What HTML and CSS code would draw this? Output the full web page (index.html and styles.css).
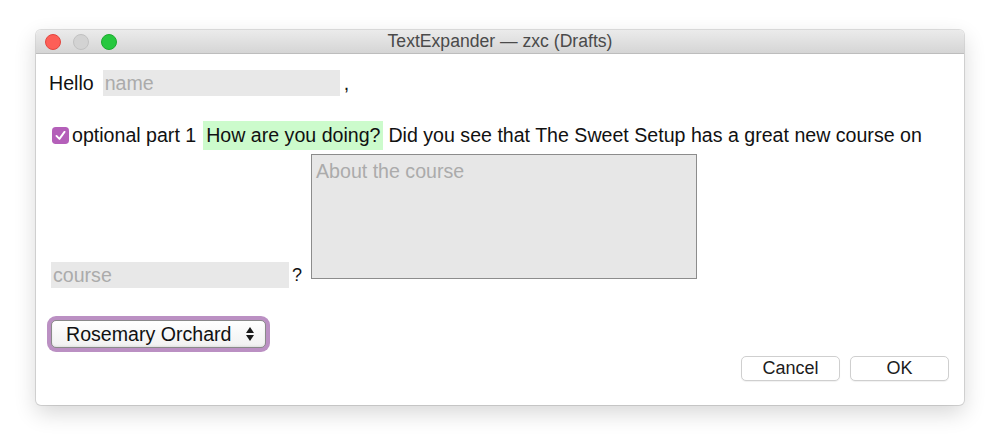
FILE: index.html
```html
<!DOCTYPE html>
<html>
<head>
<meta charset="utf-8">
<link rel="stylesheet" href="styles.css">
</head>
<body>
<div class="page">
  <div class="window">
    <div class="titlebar">
      <div class="lights">
        <span class="light red"></span>
        <span class="light gray"></span>
        <span class="light green"></span>
      </div>
      <div class="title">TextExpander — zxc (Drafts)</div>
    </div>
    <div class="content">
      <div class="row row1">
        <span class="label">Hello</span>
        <span class="field name">name</span>
        <span class="comma">,</span>
      </div>
      <div class="row row2">
        <span class="check">
          <svg width="17" height="17" viewBox="0 0 16 16"><rect x="0" y="0" width="16" height="16" rx="3.5" fill="#b45fb9"/><path d="M4.2 8.4 L7 11.2 L11.8 4.6" fill="none" stroke="#fff" stroke-width="1.8" stroke-linecap="round" stroke-linejoin="round"/></svg>
        </span>
        <span class="label opt">optional part 1</span>
        <span class="hl">How are you doing?</span>
        <span class="label rest">Did you see that The Sweet Setup has a great new course on</span>
      </div>
      <div class="row row3">
        <span class="field course">course</span>
        <span class="q">?</span>
        <div class="textarea">About the course</div>
      </div>
      <div class="row row4">
        <div class="ring">
          <div class="popup">
            <span>Rosemary Orchard</span>
            <svg class="arrows" width="10" height="18" viewBox="0 0 10 18"><path d="M5 2 L9 8 L1 8 Z" fill="#1a1a1a"/><path d="M5 16 L9 10 L1 10 Z" fill="#1a1a1a"/></svg>
          </div>
        </div>
      </div>
      <div class="row buttons">
        <div class="btn">Cancel</div>
        <div class="btn">OK</div>
      </div>
    </div>
  </div>
</div>
</body>
</html>
```
FILE: styles.css
```css
html, body {
  margin: 0;
  padding: 0;
  background: #ffffff;
}
body {
  font-family: "Liberation Sans", Arial, sans-serif;
  color: #111;
}
.page {
  width: 1000px;
  height: 447px;
  padding: 30px 0 0 36px;
  box-sizing: border-box;
}
.window {
  width: 928px;
  height: 375px;
  background: #fff;
  border-radius: 5px;
  box-shadow: 0 0 0 1px rgba(0,0,0,0.12), 0 8px 22px rgba(0,0,0,0.16);
  overflow: hidden;
  display: flex;
  flex-direction: column;
}
.titlebar {
  height: 23px;
  background: linear-gradient(#ebebeb, #d5d5d5);
  border-bottom: 1px solid #bdbdbd;
  position: relative;
  display: flex;
  align-items: center;
  justify-content: center;
}
.lights {
  position: absolute;
  left: 9px;
  top: 4px;
  display: flex;
  gap: 12px;
}
.light {
  width: 16px;
  height: 16px;
  border-radius: 50%;
  box-sizing: border-box;
}
.red { background: #fd5f57; border: 1px solid #e2463f; }
.gray { background: #d3d3d3; border: 1px solid #c1c1c1; }
.green { background: #27c83f; border: 1px solid #1daa2f; }
.title {
  font-size: 17.6px;
  color: #4a4a4a;
}
.content {
  display: flex;
  flex-direction: column;
  padding: 0 15px 0 13px;
  font-size: 19.6px;
}
.row {
  display: flex;
  align-items: center;
}
.row1 {
  margin-top: 16px;
  height: 26px;
}
.field {
  background: #e8e8e8;
  color: #ababab;
  height: 26px;
  line-height: 26px;
  padding-left: 2px;
  box-sizing: border-box;
}
.name {
  width: 237px;
  margin-left: 9px;
}
.comma {
  margin-left: 4px;
}
.row2 {
  margin-top: 25px;
  height: 29px;
}
.check {
  display: flex;
  margin-left: 3px;
  margin-right: 3px;
}
.hl {
  background: #ccfbcc;
  height: 29px;
  line-height: 29px;
  padding: 0 3px;
  margin-left: 7px;
  margin-right: 5px;
}
.row3 {
  margin-top: 4px;
  align-items: flex-end;
  height: 134px;
}
.course {
  width: 238px;
  margin-left: 2px;
}
.q {
  margin-left: 3px;
  margin-bottom: 2px;
  font-size: 18px;
}
.textarea {
  margin-left: 9px;
  margin-bottom: 9px;
  width: 386px;
  height: 125px;
  box-sizing: border-box;
  background: #e7e7e7;
  border: 1px solid #8c8c8c;
  color: #ababab;
  padding: 5px 4px;
  line-height: 22px;
}
.row4 {
  margin-top: 28px;
}
.ring {
  margin-left: -2px;
  width: 223px;
  height: 36px;
  box-sizing: border-box;
  padding: 4px;
  border-radius: 9px;
  background: #bb90c3;
}
.popup {
  width: 215px;
  height: 28px;
  box-sizing: border-box;
  border-radius: 5px;
  background: linear-gradient(#ffffff, #f1f1f1);
  border: 1px solid #8a8a8a;
  box-shadow: inset 0 -1px 2px rgba(0,0,0,0.08);
  display: flex;
  align-items: center;
  justify-content: space-between;
  padding: 0 10px 0 14px;
  color: #111;
}
.arrows {
  display: block;
}
.buttons {
  margin-top: 4px;
  justify-content: flex-end;
  gap: 10px;
}
.btn {
  width: 99px;
  height: 25px;
  box-sizing: border-box;
  border: 1px solid #cfcfcf;
  border-radius: 5px;
  background: #fff;
  box-shadow: 0 1px 1px rgba(0,0,0,0.06);
  display: flex;
  align-items: center;
  justify-content: center;
  font-size: 18px;
  color: #1c1c1c;
}
```
